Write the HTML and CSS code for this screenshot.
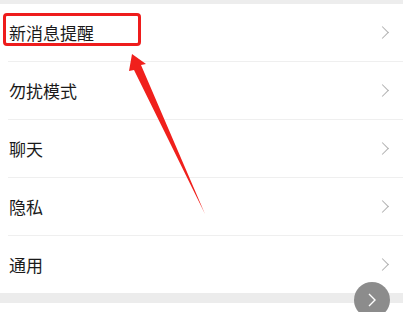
FILE: index.html
```html
<!DOCTYPE html>
<html lang="zh-CN">
<head>
  <meta charset="UTF-8">
  <title>设置</title>
  <link rel="stylesheet" href="styles.css">
</head>
<body>
  <div class="gap-top"></div>
  <ul class="menu">
    <li class="menu-item"><span>新消息提醒</span><i class="chev"></i></li>
    <li class="menu-item"><span>勿扰模式</span><i class="chev"></i></li>
    <li class="menu-item"><span>聊天</span><i class="chev"></i></li>
    <li class="menu-item"><span>隐私</span><i class="chev"></i></li>
    <li class="menu-item"><span>通用</span><i class="chev"></i></li>
  </ul>
  <div class="gap-bottom"></div>

  <!-- 标注 -->
  <div class="mark-box"></div>
  <svg class="mark-arrow" width="403" height="312" viewBox="0 0 403 312">
    <polygon points="132,54 146,64 141,65 205,214 134,70 129,71" fill="#f0201c"/>
  </svg>
  <div class="float-btn">
    <svg width="14" height="16" viewBox="0 0 14 16">
      <polyline points="4,2 10,8 4,14" fill="none" stroke="#fff" stroke-width="1.4"/>
    </svg>
  </div>
</body>
</html>
```

FILE: styles.css
```css
body {
  margin: 0;
  background: #fff;
  font-family: "Noto Sans CJK SC", sans-serif;
  overflow: hidden;
}
.gap-top {
  height: 4px;
  background: #ededed;
}
.menu {
  list-style: none;
  margin: 0;
  padding: 0;
}
.menu-item {
  display: flex;
  align-items: center;
  justify-content: space-between;
  height: 57px;
  padding: 0 14px 0 9px;
  font-size: 17px;
  color: #1a1a1a;
}
.menu-item + .menu-item {
  border-top: 1px solid #efefef;
  margin-left: 8px;
  padding-left: 1px;
}
.chev {
  width: 8px;
  height: 8px;
  border-top: 1.3px solid #b0b0b0;
  border-right: 1.3px solid #b0b0b0;
  transform: rotate(45deg);
  margin-right: 2px;
}
.gap-bottom {
  height: 10px;
  background: #ececec;
}
.mark-box {
  position: absolute;
  left: 3px;
  top: 13px;
  width: 132px;
  height: 27px;
  border: 3px solid #ee1c1c;
  border-radius: 4px;
}
.mark-arrow {
  position: absolute;
  left: 0;
  top: 0;
}
.float-btn {
  position: absolute;
  left: 354px;
  top: 282px;
  width: 36px;
  height: 36px;
  border-radius: 50%;
  background: #8c8c8c;
  display: flex;
  align-items: center;
  justify-content: center;
}
```
